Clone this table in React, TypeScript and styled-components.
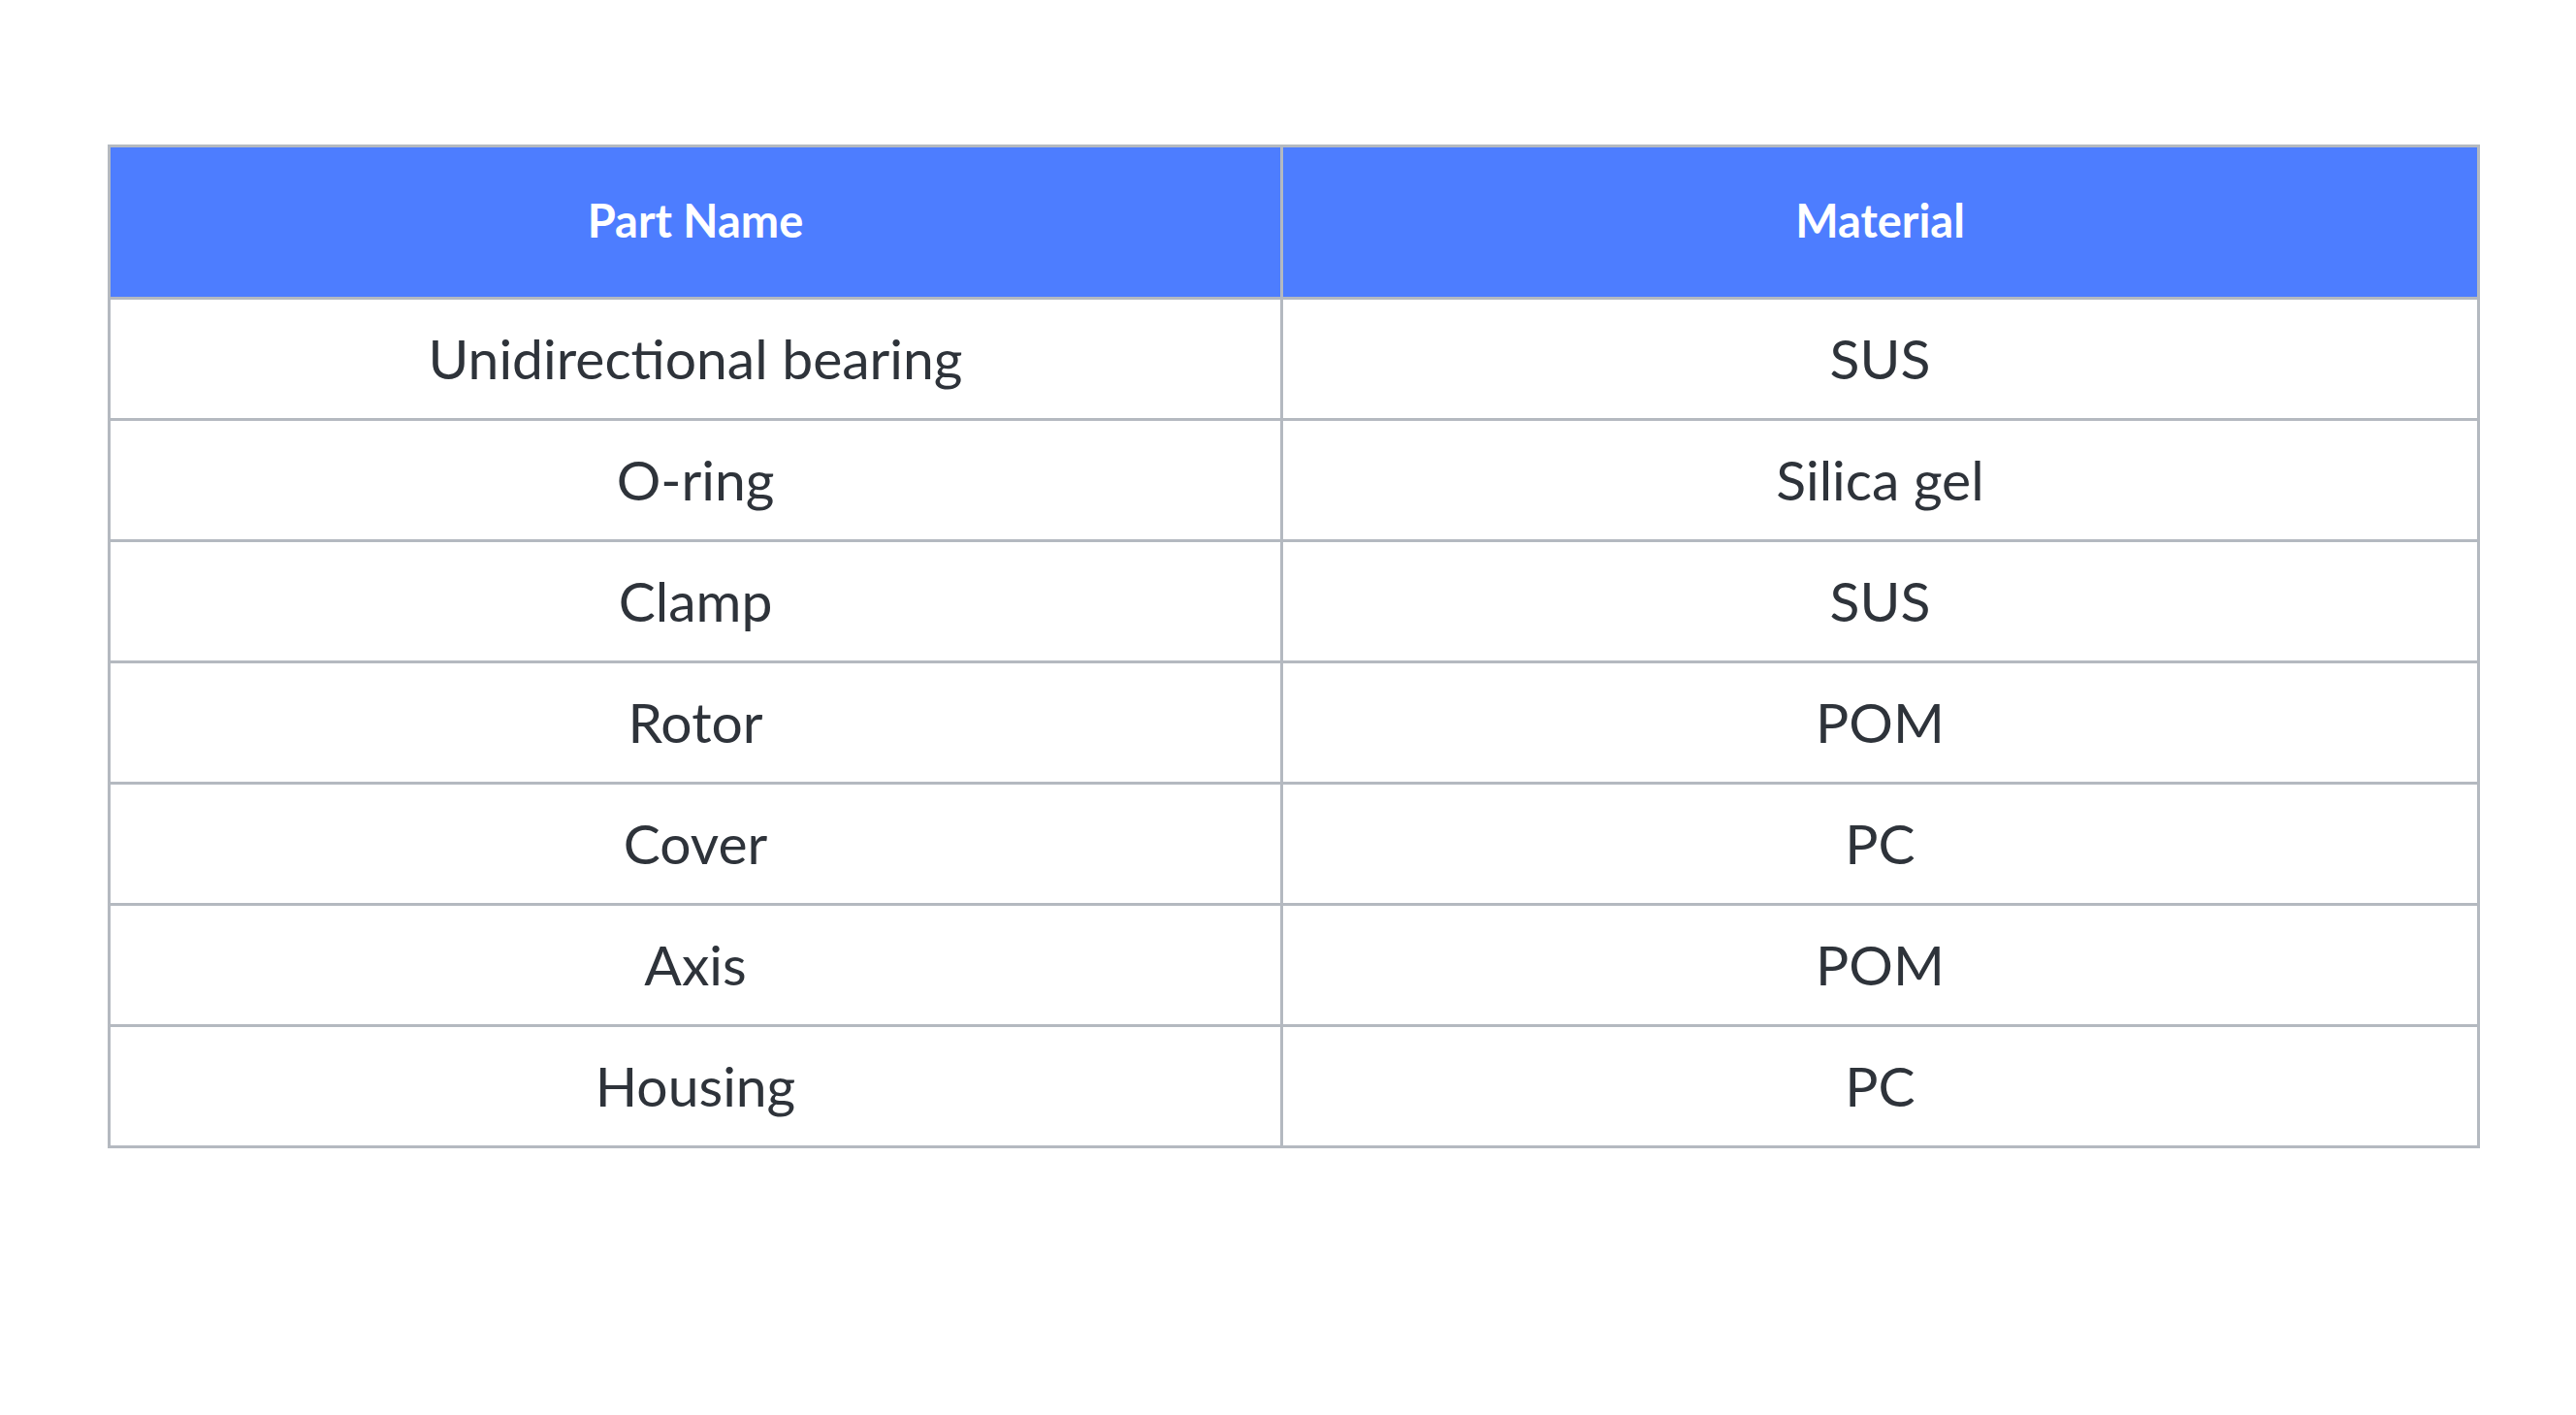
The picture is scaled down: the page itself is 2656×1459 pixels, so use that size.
import React from "react";
import styled, { createGlobalStyle } from "styled-components";

const Global = createGlobalStyle`
  html, body { margin: 0; padding: 0; background: #ffffff; }
  body { font-family: "Lato", "Liberation Sans", sans-serif; }
`;

const Page = styled.main`
  width: 2656px;
  min-height: 1459px;
  box-sizing: border-box;
  padding: 149px 0 0 111px;
  background: #ffffff;
`;

const Table = styled.table`
  border-collapse: separate;
  border-spacing: 0;
  border-top: 3px solid #b4b9c0;
  border-left: 3px solid #b4b9c0;
  table-layout: fixed;
  width: 2446px;
`;

const HeadCell = styled.th<{ $w: number }>`
  width: ${(p) => p.$w}px;
  box-sizing: content-box;
  height: 150px;
  padding: 0 0 4px 0;
  background: #4d7dff;
  color: #ffffff;
  font-family: "Lato", "Liberation Sans", sans-serif;
  font-weight: 700;
  font-size: 47px;
  text-align: center;
  vertical-align: middle;
  border-right: 3px solid #b4b9c0;
  border-bottom: 3px solid #b4b9c0;
`;

const Cell = styled.td`
  height: 120px;
  box-sizing: content-box;
  padding: 0 0 2px 0;
  background: #ffffff;
  color: #2e333a;
  font-family: "Lato", "Liberation Sans", sans-serif;
  font-weight: 400;
  font-size: 57px;
  text-align: center;
  vertical-align: middle;
  border-right: 3px solid #b4b9c0;
  border-bottom: 3px solid #b4b9c0;
`;

const rows: [string, string][] = [
  ["Unidirectional bearing", "SUS"],
  ["O-ring", "Silica gel"],
  ["Clamp", "SUS"],
  ["Rotor", "POM"],
  ["Cover", "PC"],
  ["Axis", "POM"],
  ["Housing", "PC"],
];

export default function App() {
  return (
    <Page>
      <Global />
      <Table>
        <thead>
          <tr>
            <HeadCell $w={1206}>Part Name</HeadCell>
            <HeadCell $w={1231}>Material</HeadCell>
          </tr>
        </thead>
        <tbody>
          {rows.map(([part, mat]) => (
            <tr key={part}>
              <Cell>{part}</Cell>
              <Cell>{mat}</Cell>
            </tr>
          ))}
        </tbody>
      </Table>
    </Page>
  );
}
